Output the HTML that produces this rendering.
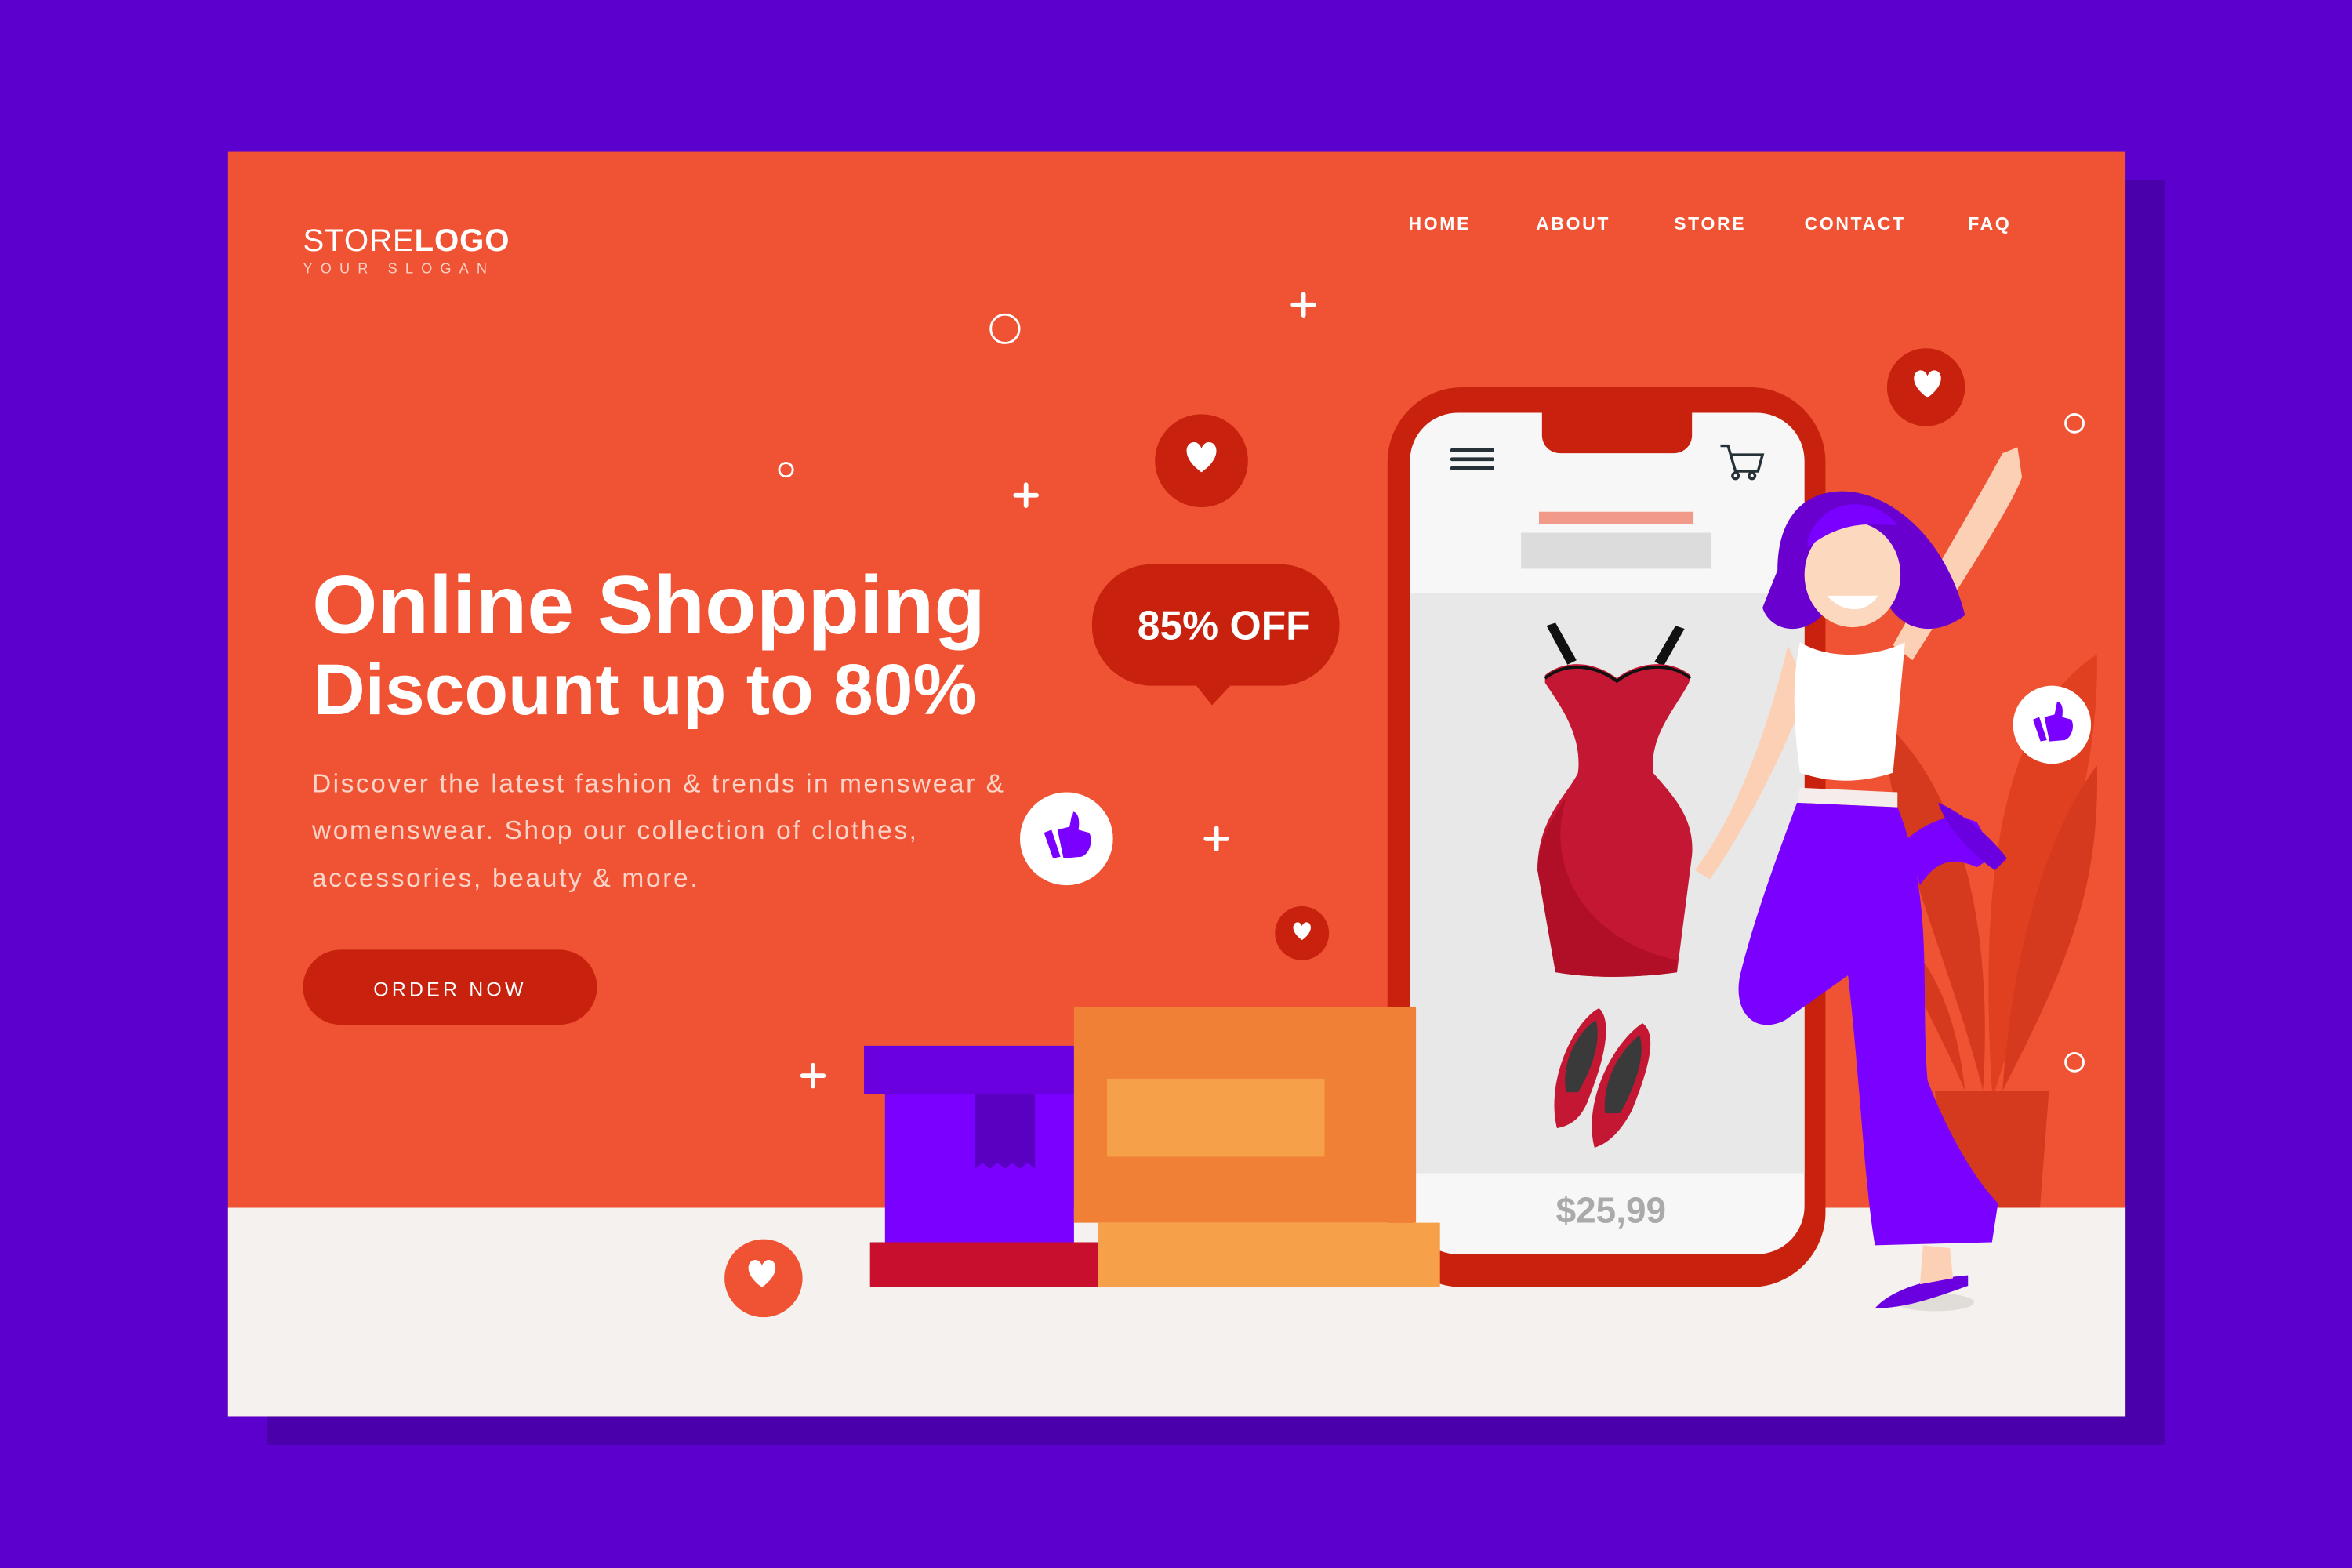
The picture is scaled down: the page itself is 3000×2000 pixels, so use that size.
<!DOCTYPE html>
<html><head><meta charset="utf-8"><style>
html,body{margin:0;padding:0;background:#5a00cc;}
svg{display:block;}
text{font-family:"Liberation Sans",sans-serif;}
</style></head><body>
<svg width="3000" height="2000" viewBox="0 0 1568 1045" xmlns="http://www.w3.org/2000/svg">
<rect width="1568" height="1045" fill="#5b00cd"/>
<rect x="178" y="120" width="1265" height="843" fill="#4a00ab"/>
<rect x="152" y="101" width="1265" height="843" fill="#f05334"/>
<rect x="152" y="805" width="1265" height="139" fill="#f5f1ee"/>

<!-- plant -->
<path d="M1290 727h76l-6 78h-64z" fill="#d63a1e"/>
<path d="M1322 727 C1300 640 1260 560 1255 480 C1300 520 1330 600 1322 727Z" fill="#d63a1e"/>
<path d="M1328 727 C1320 600 1330 480 1398 436 C1400 520 1370 600 1330 727Z" fill="#e0401f"/>
<path d="M1335 727 C1340 650 1360 560 1398 510 C1400 590 1380 640 1335 727Z" fill="#d63a1e"/>
<path d="M1310 727 C1290 680 1270 650 1262 620 C1290 640 1305 680 1310 727Z" fill="#d63a1e"/>

<!-- logo -->
<text x="202" y="167" font-size="21" fill="#fff" letter-spacing="0.5" textLength="138">STORE<tspan font-weight="bold">LOGO</tspan></text>
<text x="202" y="182" font-size="9.5" fill="#fbd0c4" letter-spacing="5.3">YOUR SLOGAN</text>

<!-- nav -->
<g font-size="12" fill="#fff" font-weight="bold" letter-spacing="1.4">
<text x="939" y="153">HOME</text>
<text x="1024" y="153">ABOUT</text>
<text x="1116" y="153">STORE</text>
<text x="1203" y="153">CONTACT</text>
<text x="1312" y="153">FAQ</text>
</g>

<!-- headline -->
<text x="208" y="422" font-size="55" font-weight="bold" fill="#fff" textLength="449" lengthAdjust="spacingAndGlyphs">Online Shopping</text>
<text x="209" y="476" font-size="48" font-weight="bold" fill="#fff" textLength="442" lengthAdjust="spacingAndGlyphs">Discount up to 80%</text>
<g font-size="17.5" fill="#fcd3c7">
<text x="208" y="528" textLength="461">Discover the latest fashion &amp; trends in menswear &amp;</text>
<text x="208" y="559" textLength="403">womenswear. Shop our collection of clothes,</text>
<text x="208" y="591" textLength="257">accessories, beauty &amp; more.</text>
</g>
<rect x="202" y="633" width="196" height="50" rx="25" fill="#c8210e"/>
<text x="300" y="664" font-size="13" fill="#fff" text-anchor="middle" letter-spacing="2.2">ORDER NOW</text>

<!-- 85% off -->
<rect x="728" y="376" width="165" height="81" rx="40" fill="#c8210e"/>
<path d="M796 455 L808 470 L822 455 Z" fill="#c8210e"/>
<text x="816" y="426" font-size="27" font-weight="bold" fill="#fff" text-anchor="middle">85% OFF</text>

<!-- decorations -->
<g stroke="#fff" stroke-width="3" stroke-linecap="round">
<path d="M869 196v14M862 203h14"/><path d="M684 323v14M677 330h14"/>
<path d="M811 552v14M804 559h14"/><path d="M542 710v14M535 717h14"/>
</g>
<g fill="none" stroke="#fff" stroke-width="1.5">
<circle cx="670" cy="219" r="9.5"/><circle cx="524" cy="313" r="4.5"/>
<circle cx="1383" cy="282" r="6"/><circle cx="1383" cy="708" r="6"/>
</g>
<defs>
<path id="hrt" d="M0 7 C-14 -3 -9 -13 -3 -11 C-1 -10 0 -8 0 -7 C0 -8 1 -10 3 -11 C9 -13 14 -3 0 7Z"/>
</defs>
<circle cx="801" cy="307" r="31" fill="#c8210e"/><use href="#hrt" transform="translate(801,307) scale(1.1)" fill="#fff"/>
<circle cx="1284" cy="258" r="26" fill="#c8210e"/><use href="#hrt" transform="translate(1285,258)" fill="#fff"/>
<circle cx="868" cy="622" r="18" fill="#c8210e"/><use href="#hrt" transform="translate(868,622) scale(0.65)" fill="#fff"/>
<circle cx="509" cy="852" r="26" fill="#f05334"/><use href="#hrt" transform="translate(508,851)" fill="#fff"/>
<circle cx="711" cy="559" r="31" fill="#fff"/>
<g transform="translate(711,559)" fill="#7a00ff"><path d="M-10 -6 L-4 12 L-9 13 L-15 -4Z"/><path d="M-6 -6 L2 -8 L4 -18 C8 -18 9 -12 8 -6 L15 -4 C18 0 16 10 10 12 L-2 13Z"/></g>
<circle cx="1368" cy="483" r="26" fill="#fff"/>
<g transform="translate(1368,483) scale(0.85)" fill="#7a00ff"><path d="M-10 -6 L-4 12 L-9 13 L-15 -4Z"/><path d="M-6 -6 L2 -8 L4 -18 C8 -18 9 -12 8 -6 L15 -4 C18 0 16 10 10 12 L-2 13Z"/></g>

<!-- phone -->
<rect x="925" y="258" width="292" height="600" rx="50" fill="#c8210e"/>
<rect x="940" y="275" width="263" height="561" rx="32" fill="#f7f7f7"/>
<rect x="940" y="395" width="263" height="387" fill="#e8e8e8"/>
<path d="M1028 270h100v20a12 12 0 0 1-12 12h-76a12 12 0 0 1-12-12z" fill="#c8210e"/>
<g stroke="#263238" stroke-width="2.5" stroke-linecap="round"><path d="M968 300h27M968 306h27M968 312h27"/></g>
<g fill="none" stroke="#263238" stroke-width="1.8"><path d="M1147 297h5l5 17h15l3-11h-21"/><circle cx="1157" cy="317" r="2"/><circle cx="1168" cy="317" r="2"/></g>
<rect x="1026" y="341" width="103" height="8" fill="#f29a8a"/>
<rect x="1014" y="355" width="127" height="24" fill="#dcdcdc"/>
<text x="1074" y="815" font-size="24" font-weight="bold" fill="#aaa" text-anchor="middle">$25,99</text>
<!-- dress -->
<path d="M1031 417l6-2 14 25-6 3zM1117 417l6 2-14 25-6-3z" fill="#111"/>
<path d="M1030 450 C1045 438 1065 442 1078 452 C1090 442 1112 438 1127 450 L1126 455 C1115 475 1100 490 1102 515 C1115 530 1130 545 1128 570 L1118 648 C1090 652 1060 652 1037 648 L1025 580 C1025 545 1045 530 1052 515 C1055 490 1040 470 1030 455Z" fill="#c41733"/>
<path d="M1037 648 L1025 580 C1025 560 1035 545 1045 530 C1030 570 1050 625 1118 640 L1118 648 C1090 652 1060 652 1037 648Z" fill="#b00f27"/>
<path d="M1030 452 C1045 440 1065 444 1078 454 C1090 444 1112 440 1127 452" fill="none" stroke="#111" stroke-width="2"/>
<!-- shoes -->
<path d="M1038 752 C1030 720 1050 680 1066 672 C1075 680 1070 705 1060 730 C1055 745 1048 750 1038 752Z" fill="#c41733"/>
<path d="M1044 728 C1040 705 1055 685 1064 680 C1068 695 1060 715 1052 728Z" fill="#3a3a3a"/>
<path d="M1063 765 C1055 735 1075 695 1095 682 C1106 690 1098 715 1088 740 C1080 755 1072 762 1063 765Z" fill="#c41733"/>
<path d="M1070 742 C1068 720 1080 700 1093 690 C1098 705 1088 728 1080 742Z" fill="#3a3a3a"/>

<!-- boxes (in front of phone) -->
<rect x="590" y="700" width="126" height="128" fill="#7a00ff"/>
<rect x="576" y="697" width="140" height="32" fill="#6a00e0"/>
<path d="M650 729h40v50l-5-4-5 4-5-4-5 4-5-4-5 4-5-4-5 4z" fill="#5a00c0"/>
<rect x="580" y="828" width="155" height="30" fill="#c8102e"/>
<rect x="716" y="671" width="228" height="144" fill="#f08035"/>
<rect x="738" y="719" width="145" height="52" fill="#f7a04a"/>
<rect x="732" y="815" width="228" height="43" fill="#f7a04a"/>

<!-- woman -->
<ellipse cx="1290" cy="868" rx="26" ry="6" fill="#e0dcd8"/>
<path d="M1250 872 C1260 860 1285 852 1312 850 L1312 857 C1290 865 1270 872 1250 872Z" fill="#6a00e0"/>
<path d="M1335 302 L1345 298 L1348 318 C1340 340 1300 400 1275 440 L1262 430 C1290 380 1320 330 1335 302Z" fill="#fcd0b4"/>
<path d="M1192 430 C1180 480 1160 540 1130 580 L1140 586 C1165 550 1190 500 1205 460Z" fill="#fcd0b4"/>
<path d="M1185 380 C1185 330 1220 322 1245 330 C1275 340 1300 370 1310 410 C1290 425 1270 420 1260 405 L1215 410 C1200 425 1180 420 1175 405Z" fill="#6a00d0"/>
<ellipse cx="1235" cy="383" rx="32" ry="35" fill="#fcd8be"/>
<path d="M1205 360 C1215 330 1250 330 1265 350 C1250 350 1230 345 1205 365Z" fill="#7a00ff"/>
<path d="M1218 397 C1230 410 1245 408 1252 397Z" fill="#fff"/>
<path d="M1200 428 C1220 440 1250 438 1270 428 L1262 515 C1240 522 1220 522 1200 515 C1195 480 1195 450 1200 428Z" fill="#fff"/>
<path d="M1200 525 L1265 528 L1265 538 L1198 535Z" fill="#f5ecec"/>
<path d="M1198 535 L1265 538 C1290 600 1280 660 1285 720 C1300 760 1320 790 1332 802 L1328 828 L1250 830 C1243 790 1240 720 1232 650 L1190 680 C1170 690 1155 675 1160 650 C1170 610 1185 570 1198 535Z" fill="#7a00ff"/>
<path d="M1270 560 C1285 548 1300 540 1318 548 L1330 570 L1318 578 C1300 570 1290 575 1280 590Z" fill="#7a00ff"/>
<path d="M1292 535 C1305 540 1325 555 1338 572 L1330 580 C1315 570 1298 552 1292 535Z" fill="#6a00e0"/>
<path d="M1282 830 L1300 832 L1302 852 L1280 856Z" fill="#fcd0b4"/>
</svg>
</body></html>
